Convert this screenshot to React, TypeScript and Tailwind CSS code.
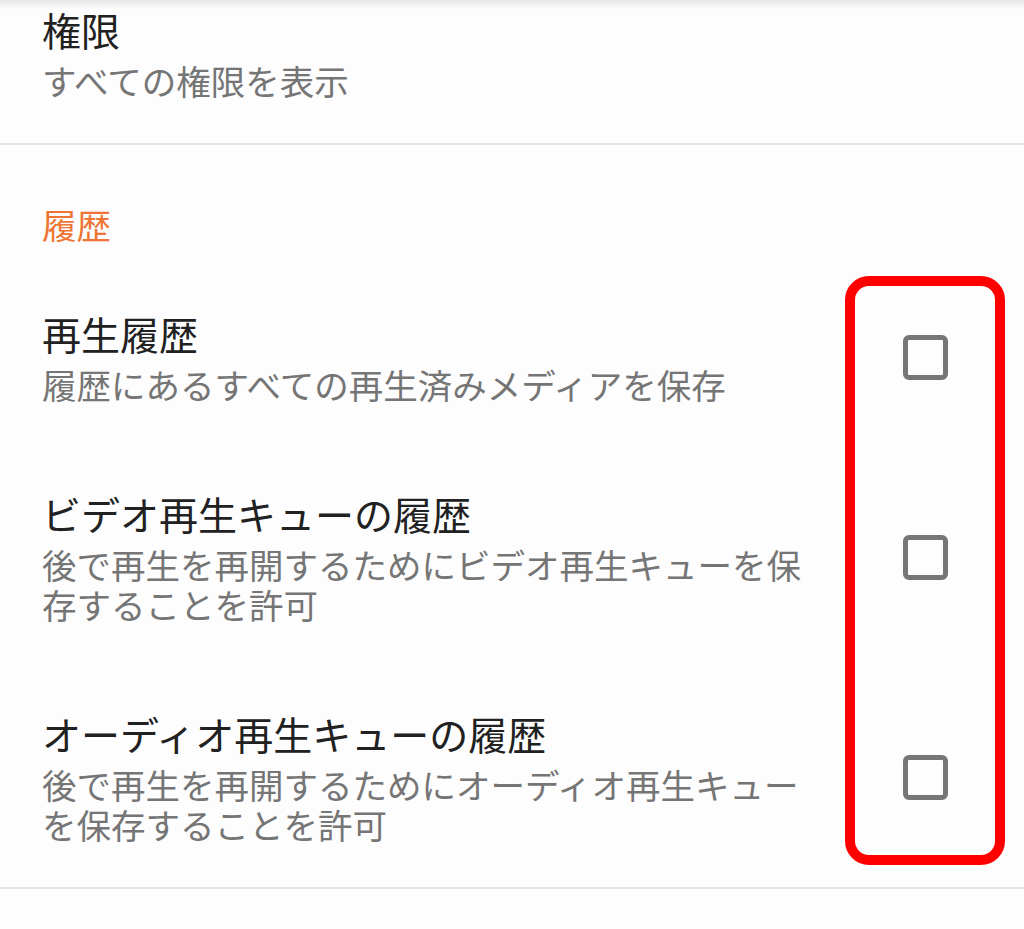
import React from 'react';

interface Pref {
  title: string;
  summary: string;
}

const historyPrefs: Pref[] = [
  { title: '再生履歴', summary: '履歴にあるすべての再生済みメディアを保存' },
  {
    title: 'ビデオ再生キューの履歴',
    summary: '後で再生を再開するためにビデオ再生キューを保存することを許可',
  },
  {
    title: 'オーディオ再生キューの履歴',
    summary: '後で再生を再開するためにオーディオ再生キューを保存することを許可',
  },
];

function Checkbox() {
  return <div className="h-[45px] w-[45px] shrink-0 rounded-[6px] border-[5px] border-[#767676]" />;
}

function PrefRow({ title, summary, checkbox }: Pref & { checkbox?: boolean }) {
  return (
    <div className="flex items-center pl-[42px] pr-[76px] py-[43px]">
      <div className="w-[766px] shrink-0">
        <div className="text-[39px] leading-[46px] text-[#212121]">{title}</div>
        <div className="mt-2 text-[34.5px] leading-[40px] text-[#757575]">{summary}</div>
      </div>
      {checkbox && (
        <div className="ml-auto">
          <Checkbox />
        </div>
      )}
    </div>
  );
}

export default function App() {
  return (
    <div
      lang="ja"
      className="relative h-[929px] w-[1024px] overflow-hidden bg-[#fdfdfd]"
      style={{ fontFamily: '"Noto Sans CJK JP", "Noto Sans", sans-serif' }}
    >
      {/* top toolbar shadow */}
      <div className="pointer-events-none absolute inset-x-0 top-0 h-[9px] bg-gradient-to-b from-[#e6e6e6] to-transparent" />

      {/* Permissions row (scrolled, top cut off) */}
      <div className="pl-[42px] pr-[76px] pt-[6px] pb-[43px]">
        <div className="text-[39px] leading-[46px] text-[#212121]">権限</div>
        <div className="mt-2 text-[34.5px] leading-[40px] text-[#757575]">すべての権限を表示</div>
      </div>

      <div className="h-[2px] bg-[#e4e4e4]" />

      {/* History category */}
      <div className="pl-[42px] pt-[59px] pb-[23px] text-[34.5px] leading-[40px] text-[#ef7535]">履歴</div>

      {historyPrefs.map((p) => (
        <PrefRow key={p.title} {...p} checkbox />
      ))}

      <div className="h-[2px] bg-[#e4e4e4]" />

      {/* highlight annotation */}
      <div className="pointer-events-none absolute left-[845px] top-[276px] h-[589px] w-[160px] rounded-[24px] border-[10px] border-[#ff0000]" />
    </div>
  );
}
